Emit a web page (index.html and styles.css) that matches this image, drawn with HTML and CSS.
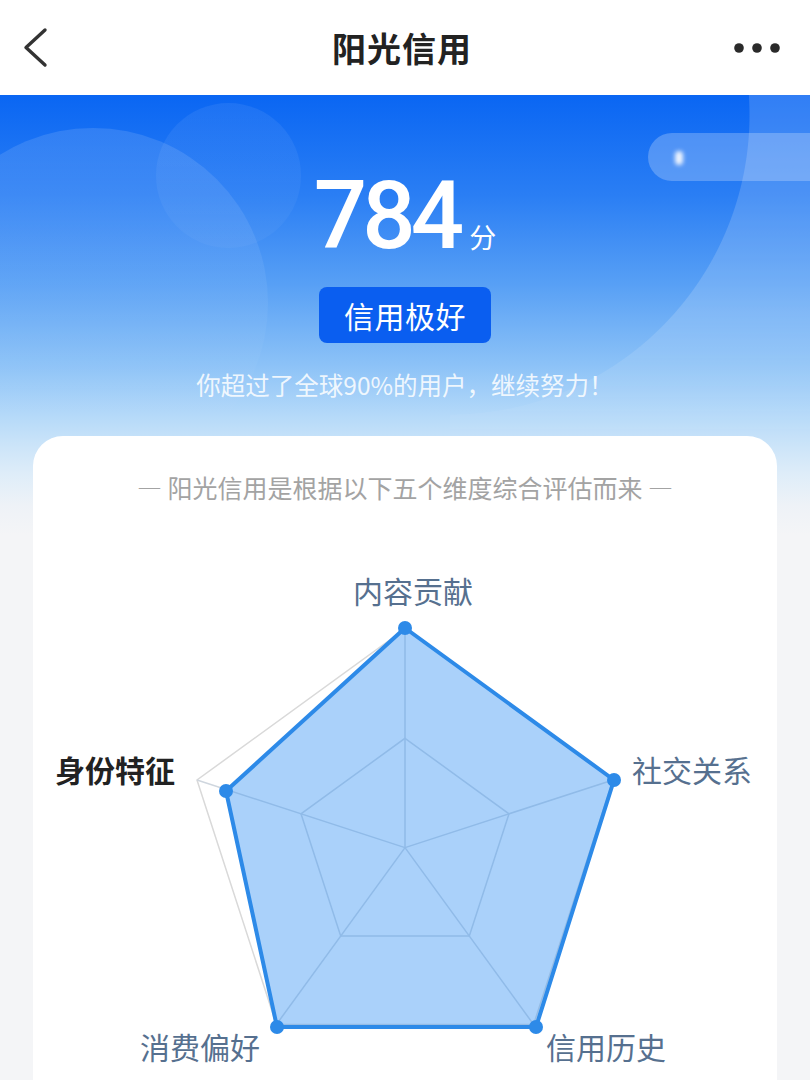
FILE: index.html
```html
<!DOCTYPE html>
<html lang="zh-CN">
<head>
<meta charset="utf-8">
<title>阳光信用</title>
<link rel="stylesheet" href="styles.css">
</head>
<body>
<div class="page">
  <header class="topbar">
    <svg class="back" width="26" height="42" viewBox="0 0 26 42">
      <polyline points="22,3 3,20.5 22,38" fill="none" stroke="#333" stroke-width="3.4" stroke-linecap="round" stroke-linejoin="round"/>
    </svg>
    <h1 class="title">阳光信用</h1>
    <svg class="more" width="48" height="12" viewBox="0 0 48 12">
      <circle cx="6" cy="6" r="4.8" fill="#2a2a2a"/>
      <circle cx="24" cy="6" r="4.8" fill="#2a2a2a"/>
      <circle cx="42" cy="6" r="4.8" fill="#2a2a2a"/>
    </svg>
  </header>

  <main class="main">
    <div class="decor">
      <div class="right-light"></div>
      <div class="circle-big"></div>
      <div class="circle-small"></div>
      <div class="pill"><span class="pill-glow"></span></div>
    </div>

    <section class="hero">
      <div class="score"><span class="num">784</span><span class="unit">分</span></div>
      <div class="badge">信用极好</div>
      <p class="beat">你超过了全球90%的用户，继续努力！</p>
    </section>

    <section class="card">
      <p class="caption">— 阳光信用是根据以下五个维度综合评估而来 —</p>
      <svg class="radar" width="744" height="600" viewBox="0 0 744 600">
        <g class="grid" fill="none" stroke="#cfd6de" stroke-width="1.5">
          <polygon points="372,126.9 580,278 500.6,522.5 243.4,522.5 164,278" stroke="#d9d9d9"/>
          <polygon points="372,236.3 476,311.8 436.3,434.1 307.7,434.1 268,311.8"/>
          <line x1="372" y1="345.6" x2="372" y2="126.9"/>
          <line x1="372" y1="345.6" x2="580" y2="278"/>
          <line x1="372" y1="345.6" x2="500.6" y2="522.5"/>
          <line x1="372" y1="345.6" x2="243.4" y2="522.5"/>
          <line x1="372" y1="345.6" x2="164" y2="278"/>
        </g>
        <polygon class="area" points="372,126 581,278 503,525 244,525 193,289"/>
        <g class="dots" fill="#2d8ae8">
          <circle cx="372" cy="126" r="7"/>
          <circle cx="581" cy="278" r="7"/>
          <circle cx="503" cy="525" r="7"/>
          <circle cx="244" cy="525" r="7"/>
          <circle cx="193" cy="289" r="7"/>
        </g>
        <g class="labels">
          <text x="380" y="93" text-anchor="middle">内容贡献</text>
          <text x="599" y="272">社交关系</text>
          <text class="strong" x="22" y="272">身份特征</text>
          <text x="107" y="549">消费偏好</text>
          <text x="513" y="549">信用历史</text>
        </g>
      </svg>
    </section>
  </main>
</div>
</body>
</html>
```

FILE: styles.css
```css
* { box-sizing: border-box; }

html, body {
  margin: 0;
  padding: 0;
}

body {
  width: 810px;
  height: 1080px;
  overflow: hidden;
  background: #f4f5f7;
  font-family: "Noto Sans CJK SC", "Noto Sans", sans-serif;
}

.page {
  width: 810px;
  height: 1080px;
  overflow: hidden;
}

.topbar {
  height: 95px;
  background: #ffffff;
  display: grid;
  grid-template-columns: 1fr auto 1fr;
  align-items: center;
  padding: 0 29px 0 23px;
}

.back { justify-self: start; display: block; }
.more { justify-self: end; display: block; }

.title {
  margin: 0;
  font-size: 34px;
  font-weight: 700;
  color: #222222;
  line-height: 1;
  letter-spacing: 1px;
}

.main {
  position: relative;
  height: 985px;
  overflow: hidden;
  background:
    linear-gradient(to bottom,
      #0a66f3 0px,
      #2a7ef4 100px,
      #58a0f5 190px,
      #8cc2f7 270px,
      #b4d9f9 320px,
      #cbe4f9 350px,
      #dfedf9 380px,
      #eef2f7 410px,
      #f4f5f7 440px) top / 100% 440px no-repeat,
    #f4f5f7;
}

.decor {
  position: absolute;
  inset: 0;
  pointer-events: none;
}

.right-light {
  position: absolute;
  left: 450px;
  top: 0;
  width: 360px;
  height: 360px;
  background: radial-gradient(circle 300px at 0px 20px, rgba(255,255,255,0) 299px, rgba(255,255,255,0.16) 300px);
  -webkit-mask-image: linear-gradient(to bottom, #000 0, #000 60%, transparent 100%);
  mask-image: linear-gradient(to bottom, #000 0, #000 60%, transparent 100%);
}

.circle-big {
  position: absolute;
  left: -82px;
  top: 33px;
  width: 350px;
  height: 350px;
  border-radius: 50%;
  background: linear-gradient(to bottom, rgba(255,255,255,0.12) 0%, rgba(255,255,255,0.05) 50%, rgba(255,255,255,0) 85%);
}

.circle-small {
  position: absolute;
  left: 156px;
  top: 8px;
  width: 145px;
  height: 145px;
  border-radius: 50%;
  background: linear-gradient(to bottom, rgba(255,255,255,0.07), rgba(255,255,255,0.03));
}

.pill {
  position: absolute;
  left: 648px;
  top: 38px;
  width: 190px;
  height: 48px;
  border-radius: 24px;
  background: rgba(255,255,255,0.24);
}

.pill-glow {
  position: absolute;
  left: 27px;
  top: 18px;
  width: 8px;
  height: 14px;
  border-radius: 4px;
  background: #ffffff;
  filter: blur(2px);
  opacity: 0.9;
}

.hero {
  position: relative;
  padding-top: 74px;
  display: flex;
  flex-direction: column;
  align-items: center;
}

.score {
  display: flex;
  align-items: baseline;
  color: #ffffff;
  height: 94px;
}

.num {
  font-family: Roboto, "Liberation Sans", sans-serif;
  font-weight: 500;
  font-size: 94px;
  line-height: 94px;
  letter-spacing: -5px;
  margin-right: 10px;
}

.unit {
  font-size: 27px;
  line-height: 1;
}

.badge {
  margin-top: 24px;
  width: 172px;
  height: 56px;
  border-radius: 8px;
  background: #0a5ef0;
  color: #ffffff;
  font-size: 30px;
  line-height: 56px;
  text-align: center;
  letter-spacing: 0.5px;
}

.beat {
  margin: 27px 0 0;
  font-size: 24.5px;
  line-height: 30px;
  color: rgba(255,255,255,0.85);
}

.card {
  position: relative;
  margin: 36px 33px 0;
  background: #ffffff;
  border-radius: 30px 30px 0 0;
  height: 700px;
  padding-top: 36px;
}

.caption {
  margin: 0;
  height: 30px;
  font-size: 25px;
  line-height: 30px;
  color: #a3a3a3;
  text-align: center;
}

.radar { display: block; }

.area {
  fill: rgba(70,155,245,0.46);
  stroke: #2d8ae8;
  stroke-width: 4;
  stroke-linejoin: round;
}

.labels text {
  font-family: "Noto Sans CJK SC", sans-serif;
  font-size: 30px;
  fill: #56708f;
  dominant-baseline: middle;
}

.labels text.strong {
  fill: #222222;
  font-weight: 700;
}
```
